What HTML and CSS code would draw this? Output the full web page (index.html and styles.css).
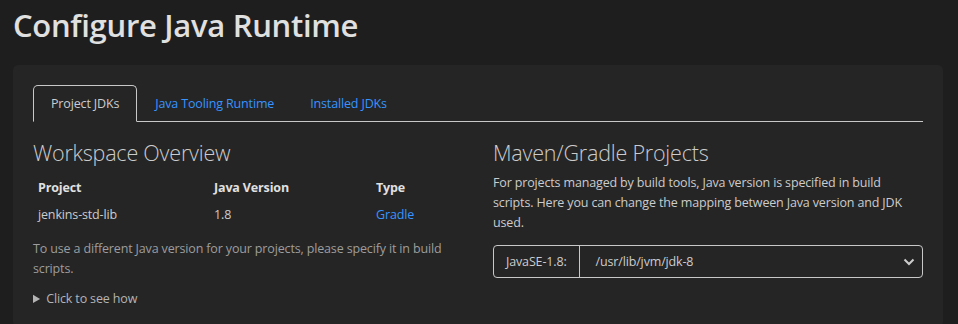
FILE: index.html
```html
<!DOCTYPE html>
<html lang="en">
<head>
  <meta charset="UTF-8" />
  <title>Configure Java Runtime</title>
  <link rel="stylesheet" href="styles.css">
</head>
<body>
  <h1 class="page-title">Configure Java Runtime</h1>

  <div class="card">
    <ul class="tabs">
      <li class="tab active">Project JDKs</li>
      <li class="tab">Java Tooling Runtime</li>
      <li class="tab">Installed JDKs</li>
    </ul>

    <div class="columns">
      <section>
        <h2>Workspace Overview</h2>
        <table class="projects">
          <thead>
            <tr>
              <th class="col-project">Project</th>
              <th class="col-version">Java Version</th>
              <th>Type</th>
            </tr>
          </thead>
          <tbody>
            <tr>
              <td>jenkins-std-lib</td>
              <td>1.8</td>
              <td><a href="#">Gradle</a></td>
            </tr>
          </tbody>
        </table>
        <p class="note">To use a different Java version for your projects, please specify it in build scripts.</p>
        <details>
          <summary>Click to see how</summary>
        </details>
      </section>

      <section>
        <h2>Maven/Gradle Projects</h2>
        <p class="desc">For projects managed by build tools, Java version is specified in build scripts. Here you can change the mapping between Java version and JDK used.</p>
        <div class="input-group">
          <span class="input-label">JavaSE-1.8:</span>
          <div class="select">
            <span>/usr/lib/jvm/jdk-8</span>
            <svg width="12" height="8" viewBox="0 0 12 8"><path d="M1.5 1.5 L6 6 L10.5 1.5" fill="none" stroke="#cccccc" stroke-width="2"/></svg>
          </div>
        </div>
      </section>
    </div>
  </div>
</body>
</html>
```

FILE: styles.css
```css
body {
  margin: 0;
  padding: 0 15px 0 13px;
  background-color: #1e1e1e;
  color: #cccccc;
  font-family: "Open Sans", "Noto Sans", sans-serif;
  font-size: 12.5px;
  letter-spacing: -0.15px;
}

.page-title {
  margin: 0;
  padding-top: 4px;
  height: 61px;
  font-size: 31px;
  font-weight: 600;
  color: #e0e0e0;
  letter-spacing: -0.3px;
}

.card {
  background-color: #252526;
  border-radius: 5px;
  padding: 20px;
  min-height: 220px;
}

.tabs {
  list-style: none;
  margin: 0;
  padding: 0;
  display: flex;
  border-bottom: 1px solid #c8c8c8;
}

.tab {
  padding: 9px 17px 8px;
  height: 18px;
  color: #3794ff;
  border: 1px solid transparent;
  border-radius: 5px 5px 0 0;
  margin-bottom: -1px;
}

.tab.active {
  color: #cccccc;
  border-color: #c8c8c8;
  border-bottom-color: #252526;
}

.columns {
  display: grid;
  grid-template-columns: 1fr 1fr;
  column-gap: 30px;
}

h2 {
  margin: 16px 0 6px;
  font-size: 21.5px;
  font-weight: 300;
  letter-spacing: -0.2px;
  color: #cccccc;
}

.projects {
  border-collapse: collapse;
}

.projects th,
.projects td {
  text-align: left;
  padding: 4px 5px;
  height: 19px;
}

.projects th {
  height: 20px;
  font-weight: 700;
  color: #e0e0e0;
}

.col-project {
  width: 166px;
}

.col-version {
  width: 152px;
}

.projects a {
  color: #3794ff;
  text-decoration: none;
}

.note {
  margin: 11px 0 11px;
  line-height: 20px;
  color: #9d9d9d;
}

summary {
  cursor: pointer;
  color: #b4b4b4;
}

.desc {
  margin: 0 0 12px;
  line-height: 20px;
}

.input-group {
  display: flex;
  height: 31px;
  border: 1px solid #c8c8c8;
  border-radius: 4px;
}

.input-label {
  display: flex;
  align-items: center;
  padding: 0 12px;
  border-right: 1px solid #c8c8c8;
}

.select {
  flex: 1;
  display: flex;
  align-items: center;
  justify-content: space-between;
  padding: 0 7px 0 16px;
}
```
